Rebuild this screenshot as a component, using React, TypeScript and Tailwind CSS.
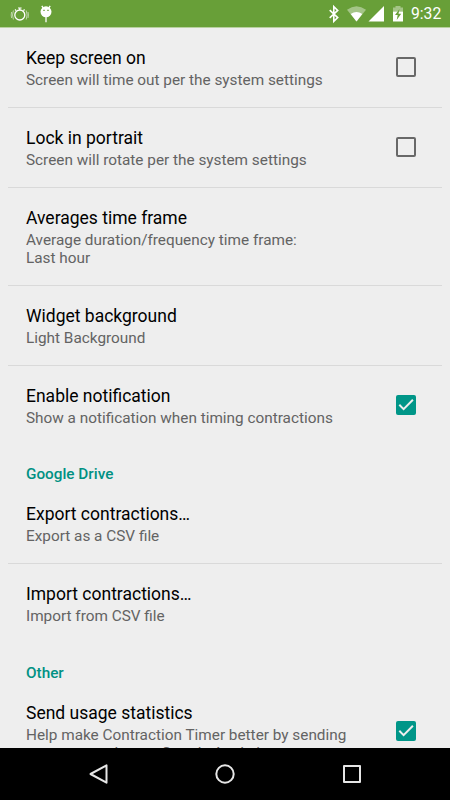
import { ReactNode } from 'react'

interface PreferenceProps {
    title: string
    summary: ReactNode
    checked?: boolean
    divider?: boolean
}

function Checkbox({ checked }: { checked: boolean }) {
    if (!checked) {
        return <span className="mb-[3px] size-5 shrink-0 self-center rounded-xs border-2 border-[#686868]" />
    }
    return (
        <svg className="mb-[3px] size-5 shrink-0 self-center" viewBox="0 0 20 20">
            <rect width="20" height="20" rx="2" fill="#009688" />
            <path d="M3.3 9.8 L7.6 14.1 L16.9 4.8" fill="none" stroke="#eee" strokeWidth="2" />
        </svg>
    )
}

function Preference({ title, summary, checked, divider = true }: PreferenceProps) {
    return (
        <div className={`mx-2 flex justify-between border-b pr-[26px] pl-[18px] pt-5 pb-[18px] ${divider ? 'border-[#d9d9d9]' : 'border-transparent'}`}>
            <div className="whitespace-nowrap">
                <h3 className="text-[17.5px] leading-[21px] text-black">{title}</h3>
                <p className="mt-0.5 text-[15.33px] leading-[18px] text-[#636363]">{summary}</p>
            </div>
            {checked !== undefined && <Checkbox checked={checked} />}
        </div>
    )
}

function Category({ title }: { title: string }) {
    return <h2 className="flex h-[38.4px] items-end pb-px pl-[26px] text-[15.3px] leading-[18px] font-medium text-[#009183]">{title}</h2>
}

function StatusBar() {
    return (
        <header className="flex h-7 shrink-0 items-center border-b border-[#b8d09f] bg-[#689f38] text-white">
            <svg className="h-7 w-[60px]" viewBox="0 0 60 28" fill="none" stroke="white">
                <circle cx="19.8" cy="15" r="5" strokeWidth="1.3" />
                <path d="M18 8h3.6M19.8 8v2M15 9.5l1.2 1.2M24.6 9.5l-1.2 1.2" strokeWidth="1.2" />
                <path d="M13.4 10.5q-1.8 4.4 0 9M26.2 10.5q1.8 4.4 0 9M11.6 12q-.8 3 0 6M28 12q.8 3 0 6" strokeWidth=".8" opacity=".7" />
                <path d="M41.8 5.8l2 3M50.2 5.8l-2 3M46 16v6.2" strokeWidth="1.3" />
                <circle cx="46" cy="11.8" r="5.5" fill="white" stroke="none" />
                <path d="M43.3 10.4h1.4M47.3 10.4h1.4" stroke="#689f38" strokeWidth="1.3" />
            </svg>
            <svg className="ml-auto h-7 w-[80px]" viewBox="326 0 80 28">
                <path d="M329.7 10.2l8 7.4-3.9 3.7V6.7l3.9 3.7-8 7.4" fill="none" stroke="white" strokeWidth="1.6" />
                <path d="M347 9.7q9.5-7 19 0L356.5 21.5z" fill="white" opacity=".4" />
                <path d="M350.7 14q5.8-4 11.6 0L356.5 21.5z" fill="white" />
                <path d="M384 6v15.5h-15.5z" fill="white" />
                <path d="M393 7.5h2.5v-1.5h5v1.5h2.5v4h-10z" fill="white" opacity=".4" />
                <path d="M393 11.5h10v10h-10z" fill="white" />
                <path d="M399.5 9l-4.5 6h2.7l-1 5 4.5-6.3h-2.7z" fill="#689f38" />
            </svg>
            <span className="mr-2 ml-[5px] w-[31px] text-[15.7px] leading-7">9:32</span>
        </header>
    )
}

function NavigationBar() {
    return (
        <nav className="h-[52px] shrink-0 bg-black">
            <svg className="h-[52px] w-full" viewBox="0 0 450 52" fill="none" stroke="#e6e6e6" strokeWidth="2" strokeLinejoin="round">
                <path d="M106.5 17.3v17.4L90.5 26z" />
                <circle cx="225" cy="26" r="8.7" />
                <rect x="344" y="18" width="16" height="16" />
            </svg>
        </nav>
    )
}

export default function App() {
    return (
        <div className="flex h-[800px] w-[450px] flex-col overflow-hidden bg-[#eee] font-['Roboto',sans-serif]">
            <StatusBar />
            <main className="min-h-0 flex-1 overflow-hidden">
                <Preference title="Keep screen on" summary="Screen will time out per the system settings" checked={false} />
                <Preference title="Lock in portrait" summary="Screen will rotate per the system settings" checked={false} />
                <Preference
                    title="Averages time frame"
                    summary={<>Average duration/frequency time frame:<br />Last hour</>}
                />
                <Preference title="Widget background" summary="Light Background" />
                <Preference title="Enable notification" summary="Show a notification when timing contractions" checked divider={false} />
                <Category title="Google Drive" />
                <Preference title="Export contractions…" summary="Export as a CSV file" />
                <Preference title="Import contractions…" summary="Import from CSV file" divider={false} />
                <Category title="Other" />
                <Preference
                    title="Send usage statistics"
                    summary={<>Help make Contraction Timer better by sending<br />anonymous data to Google Analytics</>}
                    checked
                    divider={false}
                />
            </main>
            <NavigationBar />
        </div>
    )
}
